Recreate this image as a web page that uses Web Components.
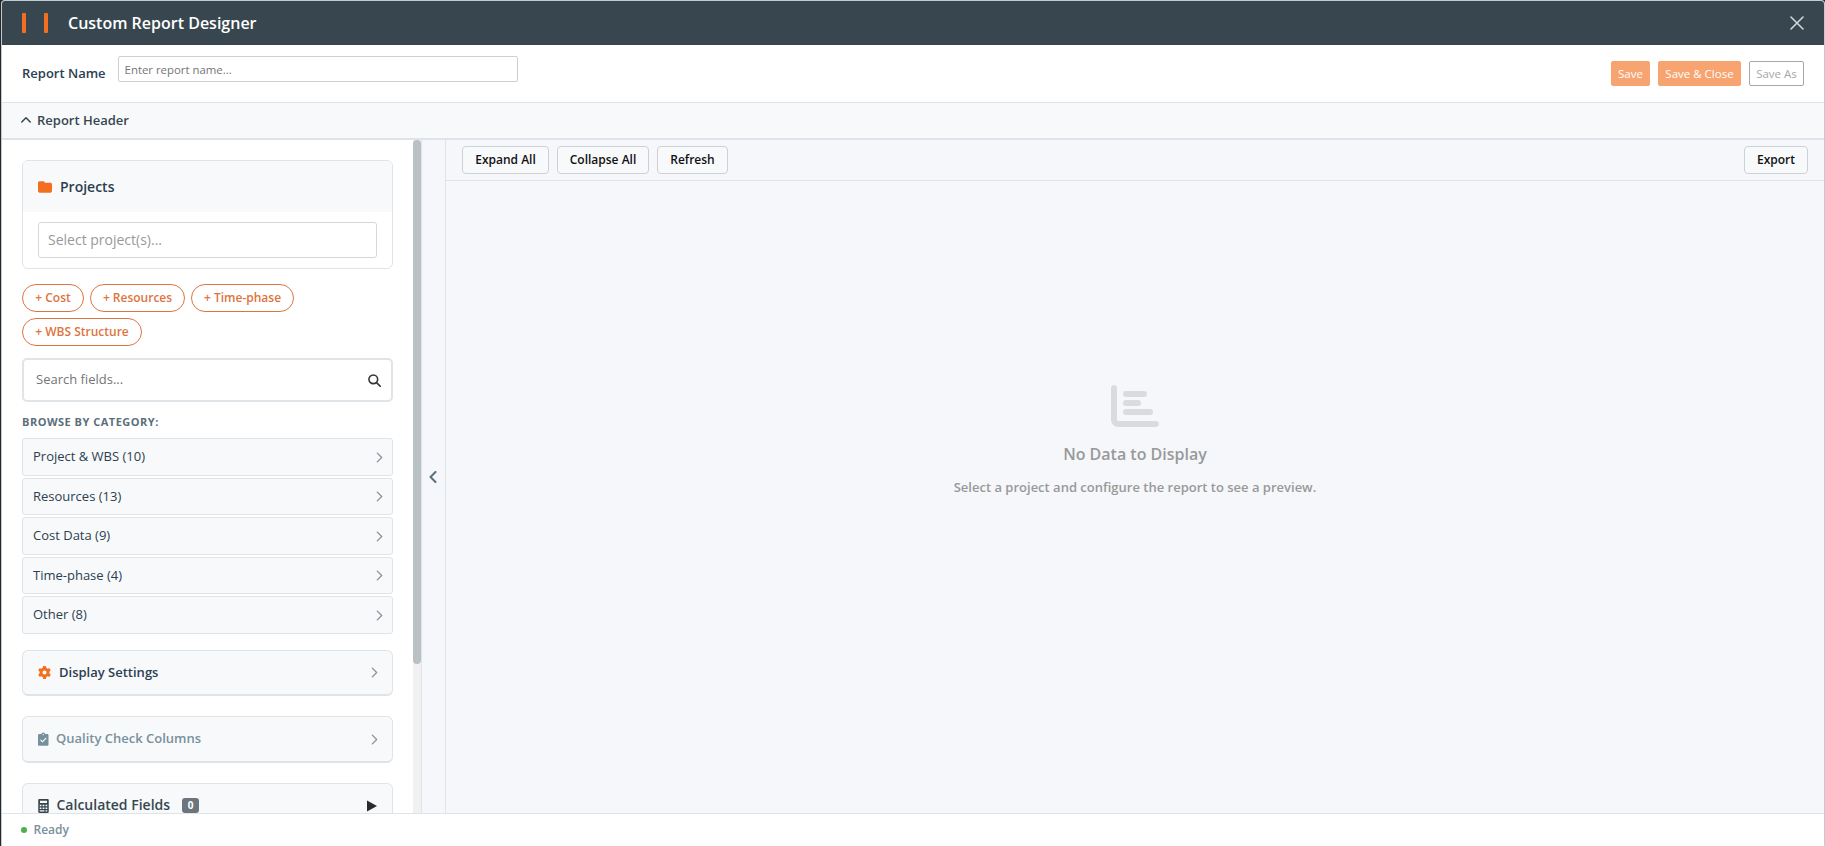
<!DOCTYPE html>
<html lang="en">
<head>
<meta charset="UTF-8">
<title>Custom Report Designer</title>
<style>
    html, body { height: 100%; margin: 0; }
    body {
        font-family: "Open Sans", "Noto Sans", sans-serif;
        font-size: 13px;
        color: #2c3e50;
        background: #26272b;
        overflow: hidden;
        --orange: #f26f21;
        --line: #dfe4e8;
        --panel: #f8f9fb;
        --canvas: #f5f7fb;
    }
</style>
</head>
<body>
<report-designer></report-designer>

<script>
const ICONS = {
    folder: ['0 0 16 16', '<path fill="currentColor" d="M1.8 1.5h4.1c.5 0 .9.2 1.2.5l.8.8c.3.3.6.4 1 .4h5.3c1 0 1.8.8 1.8 1.8v7.7c0 1-.8 1.8-1.8 1.8H1.8C.8 14.500 0 13.700 0 12.700V3.300c0-1 .8-1.800 1.800-1.800z"/>'],
    gear: ['0 0 512 512', '<path fill="currentColor" fill-rule="evenodd" d="M496 166.600c3.200 8.700.5 18.400-6.400 24.600l-43.300 39.400c1.100 8.300 1.700 16.800 1.700 25.400s-.6 17.100-1.700 25.400l43.300 39.400c6.900 6.200 9.600 15.900 6.400 24.600-4.400 11.900-9.700 23.300-15.800 34.300l-4.700 8.100c-6.600 11-14 21.400-22.100 31.200-5.900 7.200-15.700 9.600-24.500 6.800l-55.700-17.700c-13.400 10.300-28.200 18.900-44 25.400l-12.500 57.100c-2 9.100-9 16.300-18.200 17.800-13.800 2.300-28 3.500-42.500 3.500s-28.700-1.200-42.500-3.500c-9.200-1.500-16.200-8.700-18.200-17.800l-12.500-57.100c-15.800-6.500-30.600-15.100-44-25.400l-55.600 17.700c-8.800 2.800-18.600.3-24.500-6.800-8.100-9.800-15.500-20.200-22.100-31.200l-4.700-8.100c-6.100-11-11.400-22.400-15.800-34.300-3.200-8.700-.5-18.400 6.400-24.600l43.300-39.400c-1.100-8.300-1.700-16.800-1.700-25.400s.6-17.100 1.700-25.400l-43.300-39.400c-6.900-6.200-9.600-15.900-6.400-24.600 4.400-11.900 9.700-23.300 15.800-34.300l4.700-8.100c6.600-11 14-21.400 22.100-31.200 5.900-7.200 15.700-9.600 24.500-6.800l55.700 17.700c13.400-10.300 28.200-18.900 44-25.400l12.500-57.100c2-9.100 9-16.300 18.200-17.800C227.300 1.200 241.500 0 256 0s28.700 1.200 42.500 3.500c9.200 1.500 16.200 8.700 18.200 17.800l12.500 57.100c15.800 6.500 30.600 15.100 44 25.400l55.700-17.700c8.800-2.800 18.600-.3 24.500 6.800 8.100 9.800 15.500 20.200 22.100 31.200l4.700 8.100c6.100 11 11.400 22.400 15.800 34.300zM256 336a80 80 0 1 0 0-160 80 80 0 1 0 0 160z"/>'],
    clipboard: ['0 0 12 16', '<path fill="currentColor" fill-rule="evenodd" d="M3.700 2.200a2.400 2.400 0 0 1 4.600 0h2.200c.8 0 1.500.7 1.500 1.500v10.600c0 .9-.7 1.500-1.500 1.500h-9c-.8 0-1.500-.6-1.500-1.500V3.700c0-.8.7-1.500 1.500-1.500zM6 2.200a.8.8 0 1 0 0 1.600.8.8 0 0 0 0-1.600z"/><path d="M3.200 9.200l2 2 3.700-3.800" fill="none" stroke="#fff" stroke-width="1.300" stroke-linecap="round"/>'],
    calculator: ['0 0 12 16', '<path fill="currentColor" fill-rule="evenodd" d="M1.300 0h9.400c.7 0 1.300.6 1.300 1.300v13.400c0 .7-.6 1.300-1.300 1.300H1.300C.6 16 0 15.400 0 14.700V1.300C0 .6.600 0 1.300 0zM2 2v2.600h8V2zM1.700 6.500v1.900h2V6.500zM5 6.500v1.900h2V6.500zM8.300 6.500v1.900h2V6.500zM1.700 9.700v1.800h2V9.700zM5 9.700v1.800h2V9.700zM8.300 9.700v1.800h2V9.700zM1.700 12.800v1.500H7v-1.500zM8.300 12.800v1.500h2v-1.500z"/>'],
    search: ['0 0 14 14', '<circle cx="5.700" cy="5.700" r="4.700" fill="none" stroke="currentColor" stroke-width="1.700"/><path d="M9.200 9.200l4 4" stroke="currentColor" stroke-width="1.800" stroke-linecap="round"/>'],
    right: ['0 0 8 12', '<path d="M1.500 1l5 5-5 5" fill="none" stroke="currentColor" stroke-width="1.600" stroke-linecap="round" stroke-linejoin="round"/>'],
    left: ['0 0 8 12', '<path d="M6.500 1l-5 5 5 5" fill="none" stroke="currentColor" stroke-width="2" stroke-linecap="round" stroke-linejoin="round"/>'],
    up: ['0 0 10 8', '<path d="M.8 6L5 1.800 9.200 6" fill="none" stroke="currentColor" stroke-width="1.500" stroke-linecap="round" stroke-linejoin="round"/>'],
    play: ['0 0 10 12', '<path d="M0 .5l10 5.500-10 5.500z" fill="currentColor"/>'],
    close: ['0 0 14 14', '<path d="M1 1l12 12M13 1L1 13" stroke="currentColor" stroke-width="1.600" stroke-linecap="round"/>'],
    chart: ['0 0 512 512', '<path fill="currentColor" d="M32 32c17.700 0 32 14.300 32 32v336c0 8.800 7.200 16 16 16h400c17.700 0 32 14.300 32 32s-14.300 32-32 32H80c-44.200 0-80-35.800-80-80V64c0-17.700 14.300-32 32-32zm128 64h192a32 32 0 0 1 0 64H160a32 32 0 0 1 0-64zm0 96h128a32 32 0 0 1 0 64H160a32 32 0 0 1 0-64zm0 96h256a32 32 0 0 1 0 64H160a32 32 0 0 1 0-64z"/>']
};

// Small inline icon, sized with w/h attributes
class UiIcon extends HTMLElement {
    constructor() {
        super();
        this.attachShadow({ mode: 'open' });
    }

    connectedCallback() {
        const [box, shape] = ICONS[this.getAttribute('name')];
        const w = this.getAttribute('w') || 14;
        const h = this.getAttribute('h') || w;
        this.shadowRoot.innerHTML = `
            <style>
                :host { display: block; flex: none; width: ${w}px; height: ${h}px; }
                svg { display: block; }
            </style>
            <svg width="${w}" height="${h}" viewBox="${box}">${shape}</svg>
        `;
    }
}

class UiButton extends HTMLElement {
    constructor() {
        super();
        this.attachShadow({ mode: 'open' });
        this.shadowRoot.innerHTML = `
            <style>
                :host { display: block; flex: none; }
                button {
                    display: block;
                    box-sizing: border-box;
                    width: 100%;
                    height: 28px;
                    padding: 0;
                    border: 1px solid #cdd1d5;
                    border-radius: 4px;
                    background: #f8f9fb;
                    color: #111;
                    font: 600 12px/24px "Open Sans", sans-serif;
                    white-space: nowrap;
                }
                :host([kind="primary"]) button, :host([kind="outline"]) button {
                    height: 25px;
                    border-radius: 2px;
                    font-size: 11.500px;
                    font-weight: 400;
                    line-height: 23px;
                }
                :host([kind="primary"]) button { background: #f7a471; border-color: #f7a471; color: #fff; }
                :host([kind="outline"]) button { background: #fff; border-color: #a5a8aa; color: #a5a8aa; }
                :host([kind="pill"]) button {
                    padding-bottom: 1px;
                    border-color: #dd7440;
                    border-radius: 14px;
                    background: #fff;
                    color: #dd7440;
                    line-height: 24px;
                }
            </style>
            <button><slot></slot></button>
        `;
    }
}

class CategoryRow extends HTMLElement {
    constructor() {
        super();
        this.attachShadow({ mode: 'open' });
        this.shadowRoot.innerHTML = `
            <style>
                :host {
                    display: flex;
                    align-items: center;
                    justify-content: space-between;
                    box-sizing: border-box;
                    height: 37.500px;
                    padding: 0 9px 0 10px;
                    border: 1px solid var(--line);
                    border-radius: 3px;
                    background: var(--panel);
                }
                span { padding-bottom: 1px; }
                ui-icon { margin-top: 1px; color: #8c959c; }
            </style>
            <span><slot></slot></span>
            <ui-icon name="right" w="7" h="11"></ui-icon>
        `;
    }
}

// Collapsed settings card with an icon, a title and an arrow
class PanelCard extends HTMLElement {
    constructor() {
        super();
        this.attachShadow({ mode: 'open' });
        this.shadowRoot.innerHTML = `
            <style>
                :host {
                    display: flex;
                    align-items: center;
                    box-sizing: border-box;
                    height: 46px;
                    padding: 0 14px 0 15px;
                    border: 1px solid var(--line);
                    border-bottom-width: 2px;
                    border-radius: 6px;
                    background: var(--panel);
                    font-weight: 600;
                    line-height: 14px;
                }
                .title { flex: 1; display: flex; align-items: center; padding-bottom: 2px; }
                .arrow { color: #8c959c; }
            </style>
            <slot name="icon"></slot>
            <div class="title"><slot></slot></div>
            <div class="arrow"><slot name="arrow"><ui-icon name="right" w="7" h="11"></ui-icon></slot></div>
        `;
    }
}

class FieldSidebar extends HTMLElement {
    constructor() {
        super();
        this.attachShadow({ mode: 'open' });
        this.render();
    }

    render() {
        const categories = ['Project &amp; WBS (10)', 'Resources (13)', 'Cost Data (9)', 'Time-phase (4)', 'Other (8)'];
        this.shadowRoot.innerHTML = `
            <style>
                :host { display: flex; width: 419px; overflow: hidden; background: #fff; }
                .content { flex: 1; padding: 20px 20px 0 20px; }
                .projects {
                    box-sizing: border-box;
                    height: 109px;
                    border: 1px solid var(--line);
                    border-radius: 6px;
                    overflow: hidden;
                }
                .head {
                    display: flex;
                    align-items: center;
                    gap: 8px;
                    height: 51px;
                    padding: 0 15px;
                    background: var(--panel);
                    font-size: 14px;
                    font-weight: 600;
                }
                .head ui-icon, .gear { color: var(--orange); }
                .select {
                    margin: 10px 15px;
                    height: 34px;
                    padding-left: 9px;
                    border: 1px solid #d5d7d9;
                    border-radius: 3px;
                    color: #999;
                    font-size: 14px;
                    line-height: 34px;
                }
                .pills { display: flex; flex-wrap: wrap; gap: 6px; margin-top: 15px; }
                .search {
                    display: flex;
                    align-items: center;
                    justify-content: space-between;
                    box-sizing: border-box;
                    height: 44px;
                    margin-top: 12px;
                    padding: 0 10px 2px 12px;
                    border: 2px solid var(--line);
                    border-radius: 5px;
                    color: #757575;
                }
                .search ui-icon { margin-top: 2px; color: #333; }
                .label {
                    margin: 12px 0 8px;
                    color: #5a6f7b;
                    font-size: 11px;
                    font-weight: 700;
                    line-height: 16px;
                    letter-spacing: .5px;
                }
                .rows { display: flex; flex-direction: column; gap: 2px; }
                .bar { width: 8px; background: #f1f1f1; }
                .thumb { height: 524px; border-radius: 4px; background: #b9c1c4; }
                .badge {
                    width: 17px;
                    margin: 1px 0 0 12px;
                    border-radius: 3px;
                    background: #6c757d;
                    color: #fff;
                    font-size: 10px;
                    font-weight: 700;
                    line-height: 15px;
                    text-align: center;
                }
            </style>
            <div class="content">
                <div class="projects">
                    <div class="head"><ui-icon name="folder" w="14"></ui-icon>Projects</div>
                    <div class="select">Select project(s)...</div>
                </div>
                <div class="pills">
                    <ui-button kind="pill" style="width: 62px">+ Cost</ui-button>
                    <ui-button kind="pill" style="width: 95px">+ Resources</ui-button>
                    <ui-button kind="pill" style="width: 103px">+ Time-phase</ui-button>
                    <ui-button kind="pill" style="width: 120px">+ WBS Structure</ui-button>
                </div>
                <div class="search">Search fields...<ui-icon name="search" w="13"></ui-icon></div>
                <div class="label">BROWSE BY CATEGORY:</div>
                <div class="rows">
                    ${categories.map(name => `<category-row>${name}</category-row>`).join('')}
                </div>
                <panel-card style="margin-top: 16.500px">
                    <ui-icon slot="icon" class="gear" name="gear" w="13" style="margin-right: 8px"></ui-icon>Display Settings
                </panel-card>
                <panel-card style="margin-top: 20px; height: 47px; color: #78909c">
                    <ui-icon slot="icon" name="clipboard" w="10.500" h="14" style="margin-right: 7.500px"></ui-icon>Quality Check Columns
                </panel-card>
                <panel-card style="margin-top: 20px; color: #37474f; font-size: 14px">
                    <ui-icon slot="icon" name="calculator" w="11" h="14" style="margin-right: 7.500px"></ui-icon>Calculated Fields<span class="badge">0</span>
                    <ui-icon slot="arrow" name="play" w="10" h="12" style="margin-right: 1px; color: #2b2b2b"></ui-icon>
                </panel-card>
            </div>
            <div class="bar"><div class="thumb"></div></div>
        `;
    }
}

class ReportPreview extends HTMLElement {
    constructor() {
        super();
        this.attachShadow({ mode: 'open' });
        this.shadowRoot.innerHTML = `
            <style>
                :host { flex: 1; display: flex; flex-direction: column; background: var(--canvas); }
                .tools {
                    display: flex;
                    align-items: center;
                    gap: 8px;
                    height: 40px;
                    padding: 0 16px;
                    border-bottom: 1px solid var(--line);
                }
                .space { flex: 1; }
                .empty {
                    flex: 1;
                    display: flex;
                    flex-direction: column;
                    align-items: center;
                    padding-top: 201px;
                    color: #999;
                    font-weight: 600;
                }
                ui-icon { color: #d9dbdd; }
                .title { margin-top: 13px; font-size: 16px; line-height: 22px; }
                .hint { margin-top: 13px; line-height: 18px; }
            </style>
            <div class="tools">
                <ui-button style="width: 87px">Expand All</ui-button>
                <ui-button style="width: 92px">Collapse All</ui-button>
                <ui-button style="width: 71px">Refresh</ui-button>
                <div class="space"></div>
                <ui-button style="width: 64px">Export</ui-button>
            </div>
            <div class="empty">
                <ui-icon name="chart" w="48"></ui-icon>
                <div class="title">No Data to Display</div>
                <div class="hint">Select a project and configure the report to see a preview.</div>
            </div>
        `;
    }
}

class ReportDesigner extends HTMLElement {
    constructor() {
        super();
        this.attachShadow({ mode: 'open' });
        this.shadowRoot.innerHTML = `
            <style>
                :host {
                    display: flex;
                    flex-direction: column;
                    box-sizing: border-box;
                    height: 100vh;
                    margin-left: 1px;
                    border: 1px solid #c3cbd0;
                    border-bottom: 0;
                    border-radius: 4px 4px 0 0;
                    background: #fff;
                    overflow: hidden;
                }
                .titlebar {
                    display: flex;
                    align-items: center;
                    height: 44px;
                    padding: 0 20px;
                    background: #38474f;
                    color: #fff;
                    font-size: 16px;
                    font-weight: 600;
                }
                .logo { display: flex; justify-content: space-between; width: 26px; margin-right: 20px; }
                .logo i { width: 4px; height: 20px; border-radius: 1px; background: var(--orange); }
                .titlebar span { flex: 1; }
                .titlebar ui-icon { color: #cfd6da; }
                .namebar {
                    display: flex;
                    align-items: center;
                    height: 57px;
                    padding: 0 20px;
                    border-bottom: 1px solid var(--line);
                    gap: 8px;
                }
                label { margin-right: 4px; padding-bottom: 2px; font-weight: 600; }
                input {
                    box-sizing: border-box;
                    width: 400px;
                    height: 26px;
                    margin: 0 auto 9px 0;
                    padding: 1px 6px 0;
                    border: 1px solid #cbd0d4;
                    border-radius: 2px;
                    background: #fff;
                    font: 11.400px "Open Sans", sans-serif;
                }
                input::placeholder { color: #757575; }
                .section {
                    display: flex;
                    align-items: center;
                    gap: 6px;
                    height: 33px;
                    padding: 0 0 2px 19px;
                    border-bottom: 2px solid var(--line);
                    background: var(--panel);
                    color: #37474f;
                    font-weight: 600;
                }
                .body { flex: 1; display: flex; min-height: 0; }
                .toggle {
                    display: flex;
                    align-items: center;
                    justify-content: center;
                    box-sizing: border-box;
                    width: 25px;
                    padding-right: 2px;
                    border: solid var(--line);
                    border-width: 0 1px;
                    background: var(--canvas);
                    color: #5a6f80;
                }
                .status {
                    display: flex;
                    align-items: center;
                    gap: 6.500px;
                    height: 32px;
                    padding-left: 19px;
                    border-top: 1px solid var(--line);
                    color: #78909c;
                    font-size: 12px;
                    font-weight: 600;
                }
                .status span { padding-bottom: 1px; }
                .dot { width: 6px; height: 6px; border-radius: 50%; background: #4caf50; }
            </style>
            <div class="titlebar">
                <div class="logo"><i></i><i></i></div>
                <span>Custom Report Designer</span>
                <ui-icon name="close" w="14"></ui-icon>
            </div>
            <div class="namebar">
                <label>Report Name</label>
                <input placeholder="Enter report name...">
                <ui-button kind="primary" style="width: 39px">Save</ui-button>
                <ui-button kind="primary" style="width: 83px">Save &amp; Close</ui-button>
                <ui-button kind="outline" style="width: 55px">Save As</ui-button>
            </div>
            <div class="section"><ui-icon name="up" w="10" h="8"></ui-icon>Report Header</div>
            <div class="body">
                <field-sidebar></field-sidebar>
                <div class="toggle"><ui-icon name="left" w="8" h="12"></ui-icon></div>
                <report-preview></report-preview>
            </div>
            <div class="status"><div class="dot"></div><span>Ready</span></div>
        `;
    }
}

customElements.define('ui-icon', UiIcon);
customElements.define('ui-button', UiButton);
customElements.define('category-row', CategoryRow);
customElements.define('panel-card', PanelCard);
customElements.define('field-sidebar', FieldSidebar);
customElements.define('report-preview', ReportPreview);
customElements.define('report-designer', ReportDesigner);
</script>
</body>
</html>
